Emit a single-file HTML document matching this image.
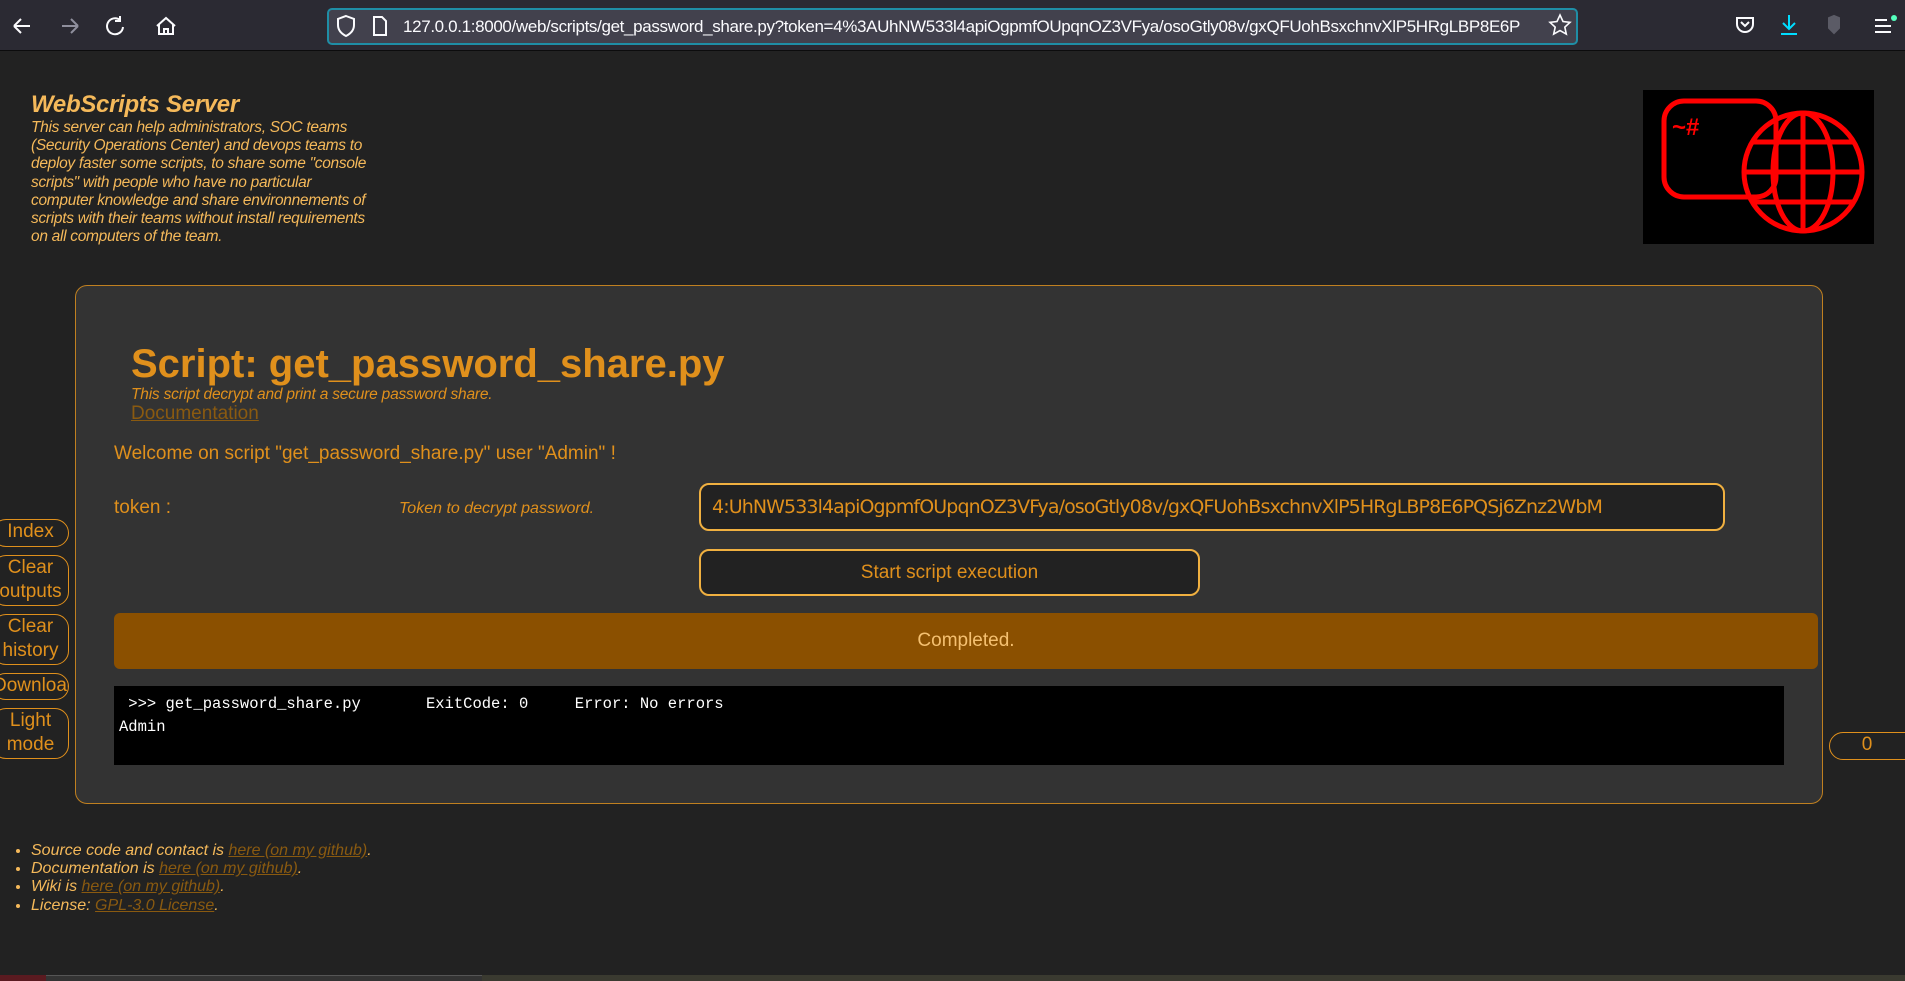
<!DOCTYPE html>
<html><head><meta charset="utf-8"><style>
*{box-sizing:border-box;margin:0;padding:0}
body{width:1905px;height:981px;overflow:hidden;background:#222;font-family:"Liberation Sans",sans-serif;position:relative}
.a{position:absolute}
.tb{left:0;top:0;width:1905px;height:51px;background:#2b2a33;border-bottom:1px solid #0c0c0d}
.url{left:327px;top:8px;width:1251px;height:37px;border:2px solid #1f8ea6;border-radius:5px;background:#42414d;color:#fbfbfe;font-size:17px;line-height:33px;padding-left:74px;padding-right:40px;white-space:nowrap;overflow:hidden;letter-spacing:-0.35px}
.or{color:#e0901c}
.sb{left:-8px;width:77px;border:1px solid #e0901c;border-radius:14px;color:#e0901c;font-size:19px;text-align:center;line-height:24px;background:#222}
</style></head><body>
<div class="a tb"></div>
<svg class="a" style="left:10px;top:12px" width="170" height="28" fill="none" stroke="#fbfbfe" stroke-width="2">
<path d="M4 14h16M4 14l7-7M4 14l7 7"/>
<path d="M52 14h16M68 14l-7-7M68 14l-7 7" stroke="#8f8f9d"/>
<path d="M110 8a8 8 0 1 0 3 7M110 4v5h-5"/>
<path d="M147 14l9-8 9 8M149 12v10h14V12M154 22v-5h4v5"/>
</svg>
<div class="a url">127.0.0.1:8000/web/scripts/get_password_share.py?token=4%3AUhNW533l4apiOgpmfOUpqnOZ3VFya/osoGtly08v/gxQFUohBsxchnvXlP5HRgLBP8E6P</div>
<svg class="a" style="left:336px;top:14px" width="60" height="24" fill="none" stroke="#fbfbfe" stroke-width="2"><path d="M10 2l8 3v6c0 6-4 9-8 11-4-2-8-5-8-11V5z"/><path d="M38 3h8l4 4v14H38z"/></svg>
<svg class="a" style="left:1548px;top:13px" width="24" height="24" fill="none" stroke="#fbfbfe" stroke-width="1.6"><path d="M12 2l3 6.5 7 .8-5.2 4.8 1.5 7L12 17.5l-6.3 3.6 1.5-7L2 9.3l7-.8z"/></svg>
<svg class="a" style="left:1734px;top:12px" width="170" height="28" fill="none" stroke-width="2">
<path d="M3 6h16v6a8 8 0 0 1-16 0z M7 10l4 4 4-4" stroke="#fbfbfe"/>
<path d="M55 3v14M49 11l6 6 6-6M47 22h16" stroke="#00ddff"/>
<path d="M95 6l5-2 5 2v10l-5 5-5-5z" fill="#5b5b66" stroke="#5b5b66"/>
<path d="M141 8h12M141 14h16M141 20h16" stroke="#fbfbfe"/>
<circle cx="160" cy="6" r="3" fill="#54ffbd" stroke="none"/>
</svg>

<div class="a" style="left:31px;top:91px;color:#f5b95a;font-style:italic;width:420px">
<div style="font-size:24px;font-weight:bold;line-height:28px;letter-spacing:-0.3px">WebScripts Server</div>
<div style="font-size:15.5px;line-height:18.2px;letter-spacing:-0.3px;white-space:nowrap">This server can help administrators, SOC teams<br>(Security Operations Center) and devops teams to<br>deploy faster some scripts, to share some "console<br>scripts" with people who have no particular<br>computer knowledge and share environnements of<br>scripts with their teams without install requirements<br>on all computers of the team.</div>
</div>
<svg class="a" style="left:1643px;top:90px" width="231" height="154"><rect width="231" height="154" fill="#000"/>
<rect x="21" y="11" width="112" height="96" rx="20" fill="none" stroke="#f00" stroke-width="5"/>
<text x="29" y="45" fill="#f00" font-size="24" font-weight="bold" font-family="Liberation Sans">~#</text>
<g fill="none" stroke="#f00" stroke-width="5"><circle cx="160" cy="82" r="59"/><ellipse cx="160" cy="82" rx="30" ry="59"/><path d="M160 23v118M101 82h118M110 52h100M110 112h100"/></g></svg>

<div class="a" style="left:75px;top:285px;width:1748px;height:519px;background:#333;border:1px solid #c08020;border-radius:12px"></div>
<div class="a or" style="left:131px;top:342px;font-size:40px;font-weight:bold;line-height:44px">Script: get_password_share.py</div>
<div class="a or" style="left:131px;top:386px;font-size:15.5px;font-style:italic;letter-spacing:-0.2px">This script decrypt and print a secure password share.</div>
<div class="a" style="left:131px;top:403px;font-size:19px;color:#8a5a10;text-decoration:underline">Documentation</div>
<div class="a or" style="left:114px;top:443px;font-size:19px">Welcome on script "get_password_share.py" user "Admin" !</div>
<div class="a or" style="left:114px;top:497px;font-size:19px">token :</div>
<div class="a or" style="left:399px;top:500px;font-size:16px;font-style:italic">Token to decrypt password.</div>
<div class="a" style="left:699px;top:483px;width:1026px;height:48px;border:2px solid #f0b040;border-radius:10px;background:#222;color:#e0901c;font-size:19px;line-height:44px;padding-left:11px;font-family:'DejaVu Sans',sans-serif;letter-spacing:-0.9px">4:UhNW533l4apiOgpmfOUpqnOZ3VFya/osoGtly08v/gxQFUohBsxchnvXlP5HRgLBP8E6PQSj6Znz2WbM</div>
<div class="a" style="left:699px;top:549px;width:501px;height:47px;border:2px solid #f0b040;border-radius:10px;background:#222;color:#e0901c;font-size:19px;line-height:43px;text-align:center">Start script execution</div>
<div class="a" style="left:114px;top:613px;width:1704px;height:56px;background:#8b5000;border-radius:6px;color:#f5c070;font-size:19px;line-height:56px;text-align:center">Completed.</div>
<div class="a" style="left:114px;top:686px;width:1670px;height:79px;background:#000;color:#fff;font-family:'Liberation Mono',monospace;font-size:15.5px;line-height:23px;padding:7px 5px;white-space:pre"> &gt;&gt;&gt; get_password_share.py       ExitCode: 0     Error: No errors
Admin</div>

<div class="a sb" style="top:519px;height:28px">Index</div>
<div class="a sb" style="top:555px;height:51px">Clear<br>outputs</div>
<div class="a sb" style="top:614px;height:51px">Clear<br>history</div>
<div class="a sb" style="top:673px;height:27px;white-space:nowrap;overflow:hidden">Download</div>
<div class="a sb" style="top:708px;height:51px">Light<br>mode</div>
<div class="a sb" style="left:1829px;top:732px;width:90px;height:28px;padding-right:14px">0</div>

<ul class="a" style="left:31px;top:842px;color:#f5b95a;font-style:italic;font-size:16px;line-height:18.2px;list-style:disc;padding-left:0">
<li>Source code and contact is <u style="color:#8a5a10">here (on my github)</u>.</li>
<li>Documentation is <u style="color:#8a5a10">here (on my github)</u>.</li>
<li>Wiki is <u style="color:#8a5a10">here (on my github)</u>.</li>
<li>License: <u style="color:#8a5a10">GPL-3.0 License</u>.</li>
</ul>
<div class="a" style="left:0;top:975px;width:1905px;height:6px;background:#3a3a30"></div>
<div class="a" style="left:0;top:975px;width:46px;height:6px;background:#5a1a20"></div>
<div class="a" style="left:46px;top:975px;width:436px;height:6px;background:#333;border-top:1px solid #555"></div>
</body></html>
